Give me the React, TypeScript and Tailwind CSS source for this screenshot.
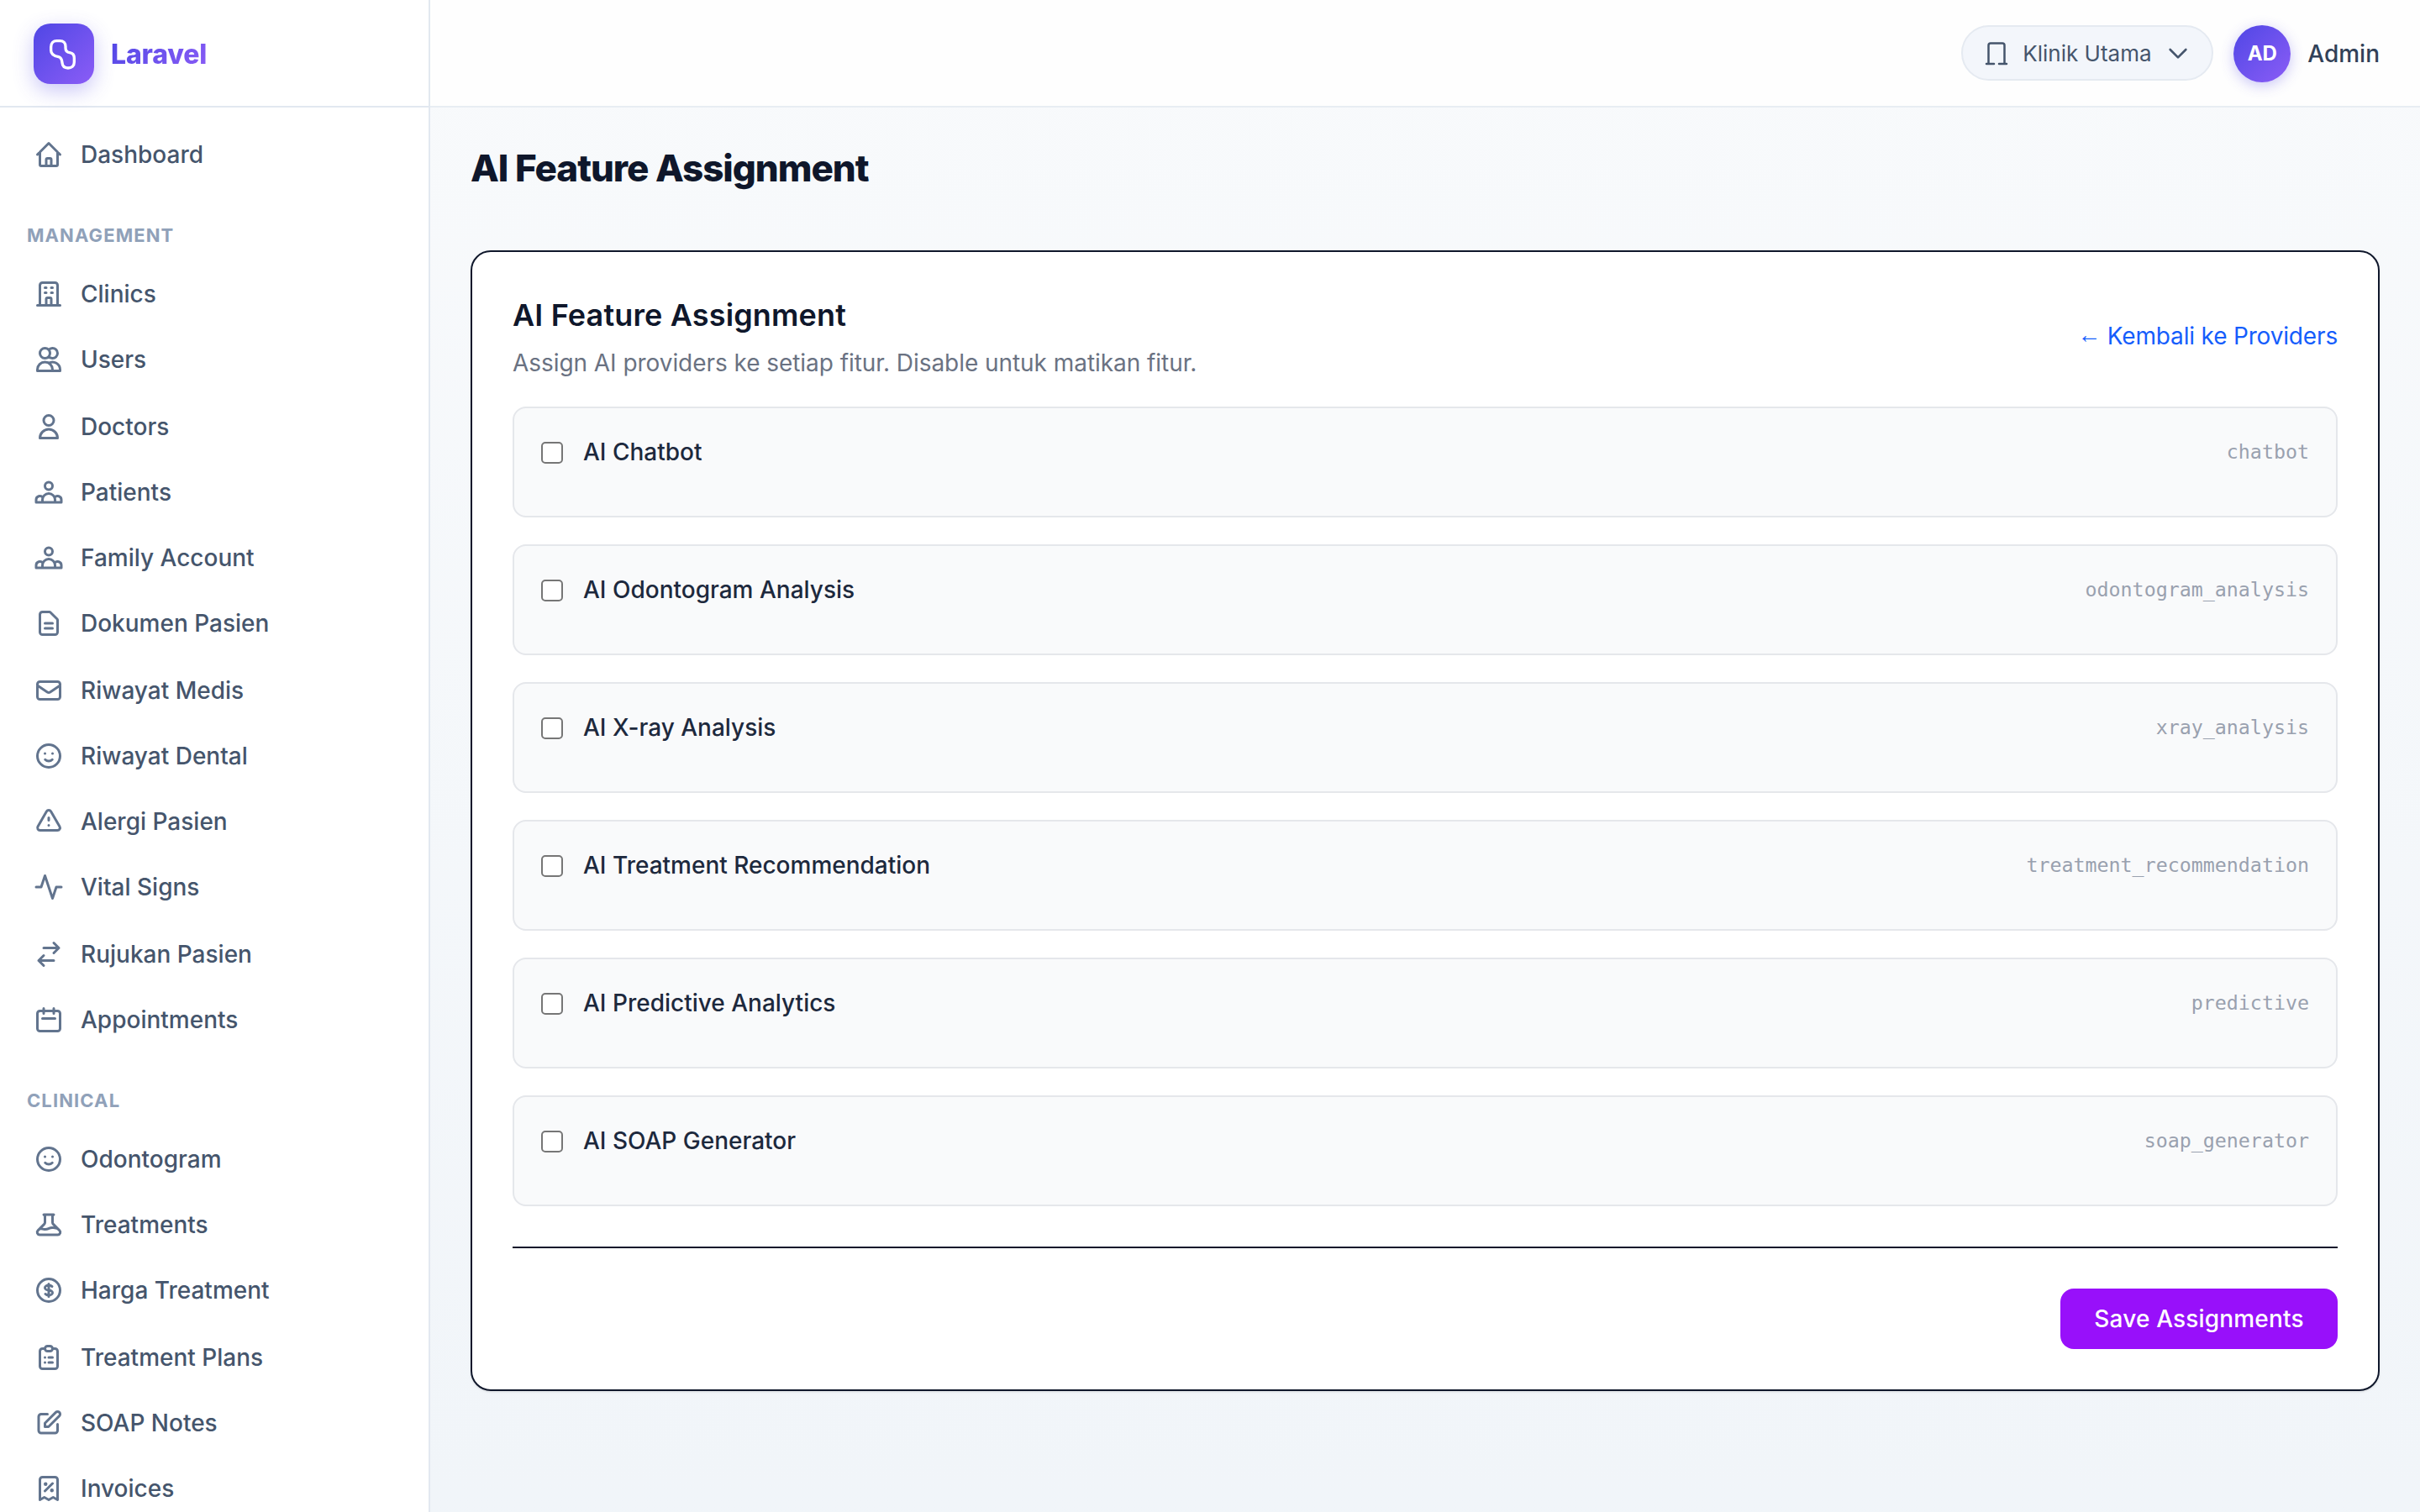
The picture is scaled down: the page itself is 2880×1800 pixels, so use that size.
import React from 'react';

type IconName =
  | 'home' | 'clinic' | 'users' | 'user' | 'group' | 'doc' | 'mail' | 'smile' | 'alert'
  | 'pulse' | 'swap' | 'calendar' | 'flask' | 'dollar' | 'clipboard' | 'edit' | 'receipt';

const ICONS: Record<IconName, React.ReactNode> = {
  home: <path d="M3 12l9-9 9 9M5 10v10a1 1 0 001 1h12a1 1 0 001-1V10M10 21v-5a1 1 0 011-1h2a1 1 0 011 1v5" />,
  clinic: <path d="M19 21V5a2 2 0 00-2-2H7a2 2 0 00-2 2v16M3 21h18M9 7h1M14 7h1M9 11h1M14 11h1M10 21v-5a1 1 0 011-1h2a1 1 0 011 1v5" />,
  users: <path d="M12 4.354a4 4 0 110 5.292M15 21H3v-1a6 6 0 0112 0v1zm0 0h6v-1a6 6 0 00-9-5.197M13 7a4 4 0 11-8 0 4 4 0 018 0z" />,
  user: <path d="M16 7a4 4 0 11-8 0 4 4 0 018 0zM12 14a7 7 0 00-7 7h14a7 7 0 00-7-7z" />,
  group: <path d="M15 7a3 3 0 11-6 0 3 3 0 016 0zM7 20H2v-2a3 3 0 015.356-1.857M17 20h5v-2a3 3 0 00-5.356-1.857M7 20h10v-2a5 5 0 00-10 0v2z" />,
  doc: <path d="M9 12h6M9 16h6M17 21H7a2 2 0 01-2-2V5a2 2 0 012-2h5.586a1 1 0 01.707.293l5.414 5.414a1 1 0 01.293.707V19a2 2 0 01-2 2z" />,
  mail: <path d="M3 8l7.890 5.260a2 2 0 002.220 0L21 8M5 19h14a2 2 0 002-2V7a2 2 0 00-2-2H5a2 2 0 00-2 2v10a2 2 0 002 2z" />,
  smile: <path d="M14.828 14.828a4 4 0 01-5.656 0M9 10h.01M15 10h.01M21 12a9 9 0 11-18 0 9 9 0 0118 0z" />,
  alert: <path d="M12 9v2m0 4h.01m-6.938 4h13.856c1.540 0 2.502-1.667 1.732-3L13.732 4c-.77-1.333-2.694-1.333-3.464 0L3.340 16c-.77 1.333.192 3 1.732 3z" />,
  pulse: <path d="M2 12h4l3-9 6 18 3-9h4" />,
  swap: <path d="M8 7h12m0 0l-4-4m4 4l-4 4M16 17H4m0 0l4 4m-4-4l4-4" />,
  calendar: <path d="M8 3v4M16 3v4M7 11h10M5 21h14a2 2 0 002-2V7a2 2 0 00-2-2H5a2 2 0 00-2 2v12a2 2 0 002 2z" />,
  flask: <path d="M19.428 15.428a2 2 0 00-1.022-.547l-2.387-.477a6 6 0 00-3.860.517l-.318.158a6 6 0 01-3.860.517L6.050 15.210a2 2 0 00-1.806.547M8 4h8l-1 1v5.172a2 2 0 00.586 1.414l5 5c1.260 1.260.367 3.414-1.415 3.414H4.828c-1.782 0-2.674-2.154-1.414-3.414l5-5A2 2 0 009 10.172V5L8 4z" />,
  dollar: <path d="M12 8c-1.657 0-3 .895-3 2s1.343 2 3 2 3 .895 3 2-1.343 2-3 2m0-8c1.110 0 2.080.402 2.599 1M12 8V7m0 1v8m0 0v1m0-1c-1.110 0-2.080-.402-2.599-1M21 12a9 9 0 11-18 0 9 9 0 0118 0z" />,
  clipboard: <path d="M9 5H7a2 2 0 00-2 2v12a2 2 0 002 2h10a2 2 0 002-2V7a2 2 0 00-2-2h-2M9 5a2 2 0 002 2h2a2 2 0 002-2M9 5a2 2 0 012-2h2a2 2 0 012 2m-3 7h3m-3 4h3m-6-4h.01M9 16h.01" />,
  edit: <path d="M11 5H6a2 2 0 00-2 2v11a2 2 0 002 2h11a2 2 0 002-2v-5m-1.414-9.414a2 2 0 112.828 2.828L11.828 15H9v-2.828l8.586-8.586z" />,
  receipt: <path d="M9 14l6-6m-5.500.500h.01m4.990 5h.01M19 21V5a2 2 0 00-2-2H7a2 2 0 00-2 2v16l3.500-2 3.500 2 3.500-2 3.500 2zM10 8.500a.5.5 0 11-1 0 .5.5 0 011 0zm5 5a.5.5 0 11-1 0 .5.5 0 011 0z" />,
};

const MANAGEMENT: [IconName, string][] = [
  ['clinic', 'Clinics'],
  ['users', 'Users'],
  ['user', 'Doctors'],
  ['group', 'Patients'],
  ['group', 'Family Account'],
  ['doc', 'Dokumen Pasien'],
  ['mail', 'Riwayat Medis'],
  ['smile', 'Riwayat Dental'],
  ['alert', 'Alergi Pasien'],
  ['pulse', 'Vital Signs'],
  ['swap', 'Rujukan Pasien'],
  ['calendar', 'Appointments'],
];

const CLINICAL: [IconName, string][] = [
  ['smile', 'Odontogram'],
  ['flask', 'Treatments'],
  ['dollar', 'Harga Treatment'],
  ['clipboard', 'Treatment Plans'],
  ['edit', 'SOAP Notes'],
  ['receipt', 'Invoices'],
];

const FEATURES = [
  { label: 'AI Chatbot', key: 'chatbot' },
  { label: 'AI Odontogram Analysis', key: 'odontogram_analysis' },
  { label: 'AI X-ray Analysis', key: 'xray_analysis' },
  { label: 'AI Treatment Recommendation', key: 'treatment_recommendation' },
  { label: 'AI Predictive Analytics', key: 'predictive' },
  { label: 'AI SOAP Generator', key: 'soap_generator' },
];

const NavItem: React.FC<{ icon: IconName; label: string; className?: string }> = ({ icon, label, className = '' }) => (
  <a className={`flex h-[78px] shrink-0 items-center gap-5 px-6 text-[28px] font-medium text-slate-600 ${className}`}>
    <svg className="size-9 shrink-0 text-slate-500" viewBox="0 0 24 24" fill="none" stroke="currentColor" strokeWidth={2} strokeLinecap="round" strokeLinejoin="round">
      {ICONS[icon]}
    </svg>
    <span>{label}</span>
  </a>
);

const NavHeading: React.FC<{ children: React.ReactNode }> = ({ children }) => (
  <h3 className="flex h-[62px] shrink-0 items-center px-4 text-[22px] font-bold tracking-[0.05em] text-slate-400">{children}</h3>
);

const Sidebar: React.FC = () => (
  <aside className="flex w-[512px] shrink-0 flex-col overflow-hidden border-r-2 border-slate-200 bg-white">
    <div className="flex h-32 shrink-0 items-center gap-5 border-b-2 border-slate-200 px-10 pt-0.5">
      <div className="flex size-[72px] items-center justify-center rounded-[20px] bg-linear-135 from-[#4f46e5] to-[#8b5cf6] shadow-[0_8px_24px_rgba(79,70,229,0.3)]">
        <svg className="size-10" viewBox="168 132 120 120" fill="none" stroke="white" strokeWidth={10} strokeLinejoin="round">
          <path d="M182 168C182 153 191 146 202 146H214C227 146 234 154 234 166V171C234 182 239 187 249 188C260 190 265 197 265 207V222C265 236 255 243 243 243C231 243 223 236 222 224C221 212 218 205 209 203C192 200 182 194 182 180Z" />
        </svg>
      </div>
      <span className="mt-0.5 bg-linear-135 from-[#4f46e5] to-[#8b5cf6] bg-clip-text text-[32px] font-extrabold tracking-[-0.005em] text-transparent">Laravel</span>
    </div>
    <nav className="flex flex-col px-4 pt-[17px]">
      <NavItem icon="home" label="Dashboard" />
      <div className="mt-[26px] flex flex-col">
        <NavHeading>MANAGEMENT</NavHeading>
        {MANAGEMENT.map(([icon, label], i) => (
          <NavItem key={label} icon={icon} label={label} className={i % 4 === 2 ? 'mt-0.5' : ''} />
        ))}
      </div>
      <div className="mt-[26px] flex flex-col">
        <NavHeading>CLINICAL</NavHeading>
        {CLINICAL.map(([icon, label], i) => (
          <NavItem key={label} icon={icon} label={label} className={i % 4 === 3 ? 'mt-0.5' : ''} />
        ))}
      </div>
    </nav>
  </aside>
);

const Topbar: React.FC = () => (
  <header className="flex h-32 shrink-0 items-center justify-end border-b-2 border-[#e8edf3] bg-[#fefefe] px-12">
    <button className="mr-6 flex h-[66px] w-[300px] items-center rounded-full border-2 border-[#e5eaf1] bg-[#f3f6fb] pl-6 text-[26px] text-slate-600">
      <svg className="size-8 shrink-0" viewBox="0 0 32 32" fill="none" stroke="currentColor" strokeWidth={2.500} strokeLinecap="round" strokeLinejoin="round">
        <path d="M6.500 29V7a2.500 2.500 0 012.500-2.500h14a2.500 2.500 0 012.500 2.500v22M4 29h9M19 29h9" />
      </svg>
      <span className="ml-[15px]">Klinik Utama</span>
      <svg className="ml-[15px] size-8 shrink-0" viewBox="0 0 24 24" fill="none" stroke="currentColor" strokeWidth={2} strokeLinecap="round" strokeLinejoin="round">
        <path d="M19 9l-7 7-7-7" />
      </svg>
    </button>
    <div className="mt-0.5 flex size-[68px] items-center justify-center rounded-full bg-linear-135 from-[#4f46e5] to-[#8b5cf6] text-2xl font-bold text-white shadow-[0_4px_16px_rgba(79,70,229,0.3)]">
      AD
    </div>
    <span className="mt-0.5 ml-5 text-[28px] font-medium text-slate-700">Admin</span>
  </header>
);

const FeatureRow: React.FC<{ label: string; code: string }> = ({ label, code }) => (
  <div className="flex h-[132px] items-start rounded-2xl border-2 border-gray-200 bg-gray-50 px-8 pt-8">
    <input type="checkbox" className="mt-2 size-[26px] shrink-0 appearance-none rounded-[5px] border-2 border-[#767676] bg-white" />
    <span className="ml-6 text-[28px] leading-10 font-medium text-slate-800">{label}</span>
    <span className="ml-auto font-['DejaVu_Sans_Mono',monospace] text-[23.3px] leading-10 text-gray-400">{code}</span>
  </div>
);

const App: React.FC = () => {
  return (
    <div className="flex h-[1800px] w-[2880px] overflow-hidden bg-linear-to-b from-slate-50 to-slate-100 font-['Inter',sans-serif]">
      <Sidebar />

      <div className="flex flex-1 flex-col">
        <Topbar />

        <main className="px-12 pt-[47px]">
          <h1 className="text-[44px] leading-[50px] font-extrabold tracking-[-0.024em] text-slate-900">AI Feature Assignment</h1>

          <section className="mt-[73px] rounded-3xl border-2 border-slate-900 bg-white p-12 shadow-sm">
            <div className="flex items-center justify-between">
              <div>
                <h2 className="text-4xl leading-[54px] font-semibold tracking-[0.004em] text-slate-900">AI Feature Assignment</h2>
                <p className="mt-2.5 text-[28px] leading-10 tracking-[-0.002em] text-gray-500">Assign AI providers ke setiap fitur. Disable untuk matikan fitur.</p>
              </div>
              <a className="text-[28px] tracking-[-0.006em] text-blue-600">
                <span className="relative -top-0.5 font-['Liberation_Sans',sans-serif]">←</span> Kembali ke Providers
              </a>
            </div>

            <div className="mt-8 flex flex-col gap-8">
              {FEATURES.map((f) => (
                <FeatureRow key={f.key} label={f.label} code={f.key} />
              ))}
            </div>

            {/* Form actions */}
            <div className="mt-12 flex justify-end border-t-2 border-slate-900 pt-12">
              <button className="h-[72px] w-[330px] rounded-2xl bg-purple-600 text-[28px] font-medium tracking-[0.006em] text-white">Save Assignments</button>
            </div>
          </section>
        </main>
      </div>
    </div>
  );
};

export default App;
